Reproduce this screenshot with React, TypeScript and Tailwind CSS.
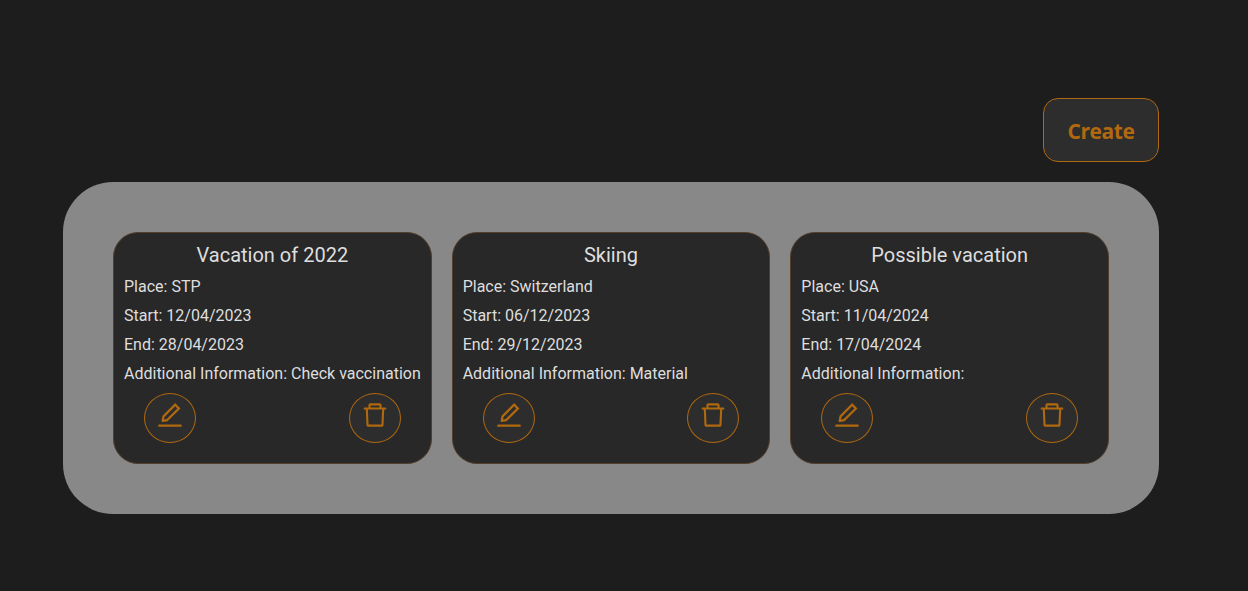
import { AiOutlineDelete, AiOutlineEdit } from "react-icons/ai";

type Vacation = {
  title: string;
  place: string;
  start: string;
  end: string;
  info: string;
};

const vacations: Vacation[] = [
  { title: "Vacation of 2022", place: "STP", start: "12/04/2023", end: "28/04/2023", info: "Check vaccination" },
  { title: "Skiing", place: "Switzerland", start: "06/12/2023", end: "29/12/2023", info: "Material" },
  { title: "Possible vacation", place: "USA", start: "11/04/2024", end: "17/04/2024", info: "" },
];

const iconButton =
  "flex h-[50px] w-[52px] items-start justify-center rounded-[50%] border border-[#b0690f] bg-[#2d2d2d] pt-1.5 text-[#b0690f]";

function VacationCard({ vacation }: { vacation: Vacation }) {
  return (
    <article className="h-[232px] min-w-0 rounded-[25px] border border-[#533f2b] bg-[#282828] p-2.5 text-base leading-6 text-[#dedede]">
      <h2 className="mb-2 text-center text-xl leading-6">{vacation.title}</h2>
      <div className="flex flex-col gap-[5px] whitespace-nowrap">
        <p>Place: {vacation.place}</p>
        <p>Start: {vacation.start}</p>
        <p>End: {vacation.end}</p>
        <p>Additional Information: {vacation.info}</p>
      </div>
      <div className="mt-[7px] flex justify-between px-5">
        <button className={iconButton} aria-label="Edit">
          <AiOutlineEdit size={30} />
        </button>
        <button className={iconButton} aria-label="Delete">
          <AiOutlineDelete size={30} />
        </button>
      </div>
    </article>
  );
}

export default function App() {
  return (
    <main className="flex h-[591px] flex-col bg-[#1d1d1d] pt-[98px] pr-[89px] pl-[63px] font-['Roboto',sans-serif]">
      <button className="h-16 w-[116px] self-end rounded-[15px] border border-[#b0690f] bg-[#2d2d2d] pt-[3px] font-['Open_Sans',sans-serif] text-[21px] font-bold tracking-[-0.4px] text-[#b0690f]">
        Create
      </button>
      <section className="mt-5 grid h-[332px] grid-cols-3 gap-5 rounded-[50px] bg-[#888888] p-[50px]">
        {vacations.map((vacation) => (
          <VacationCard key={vacation.title} vacation={vacation} />
        ))}
      </section>
    </main>
  );
}
